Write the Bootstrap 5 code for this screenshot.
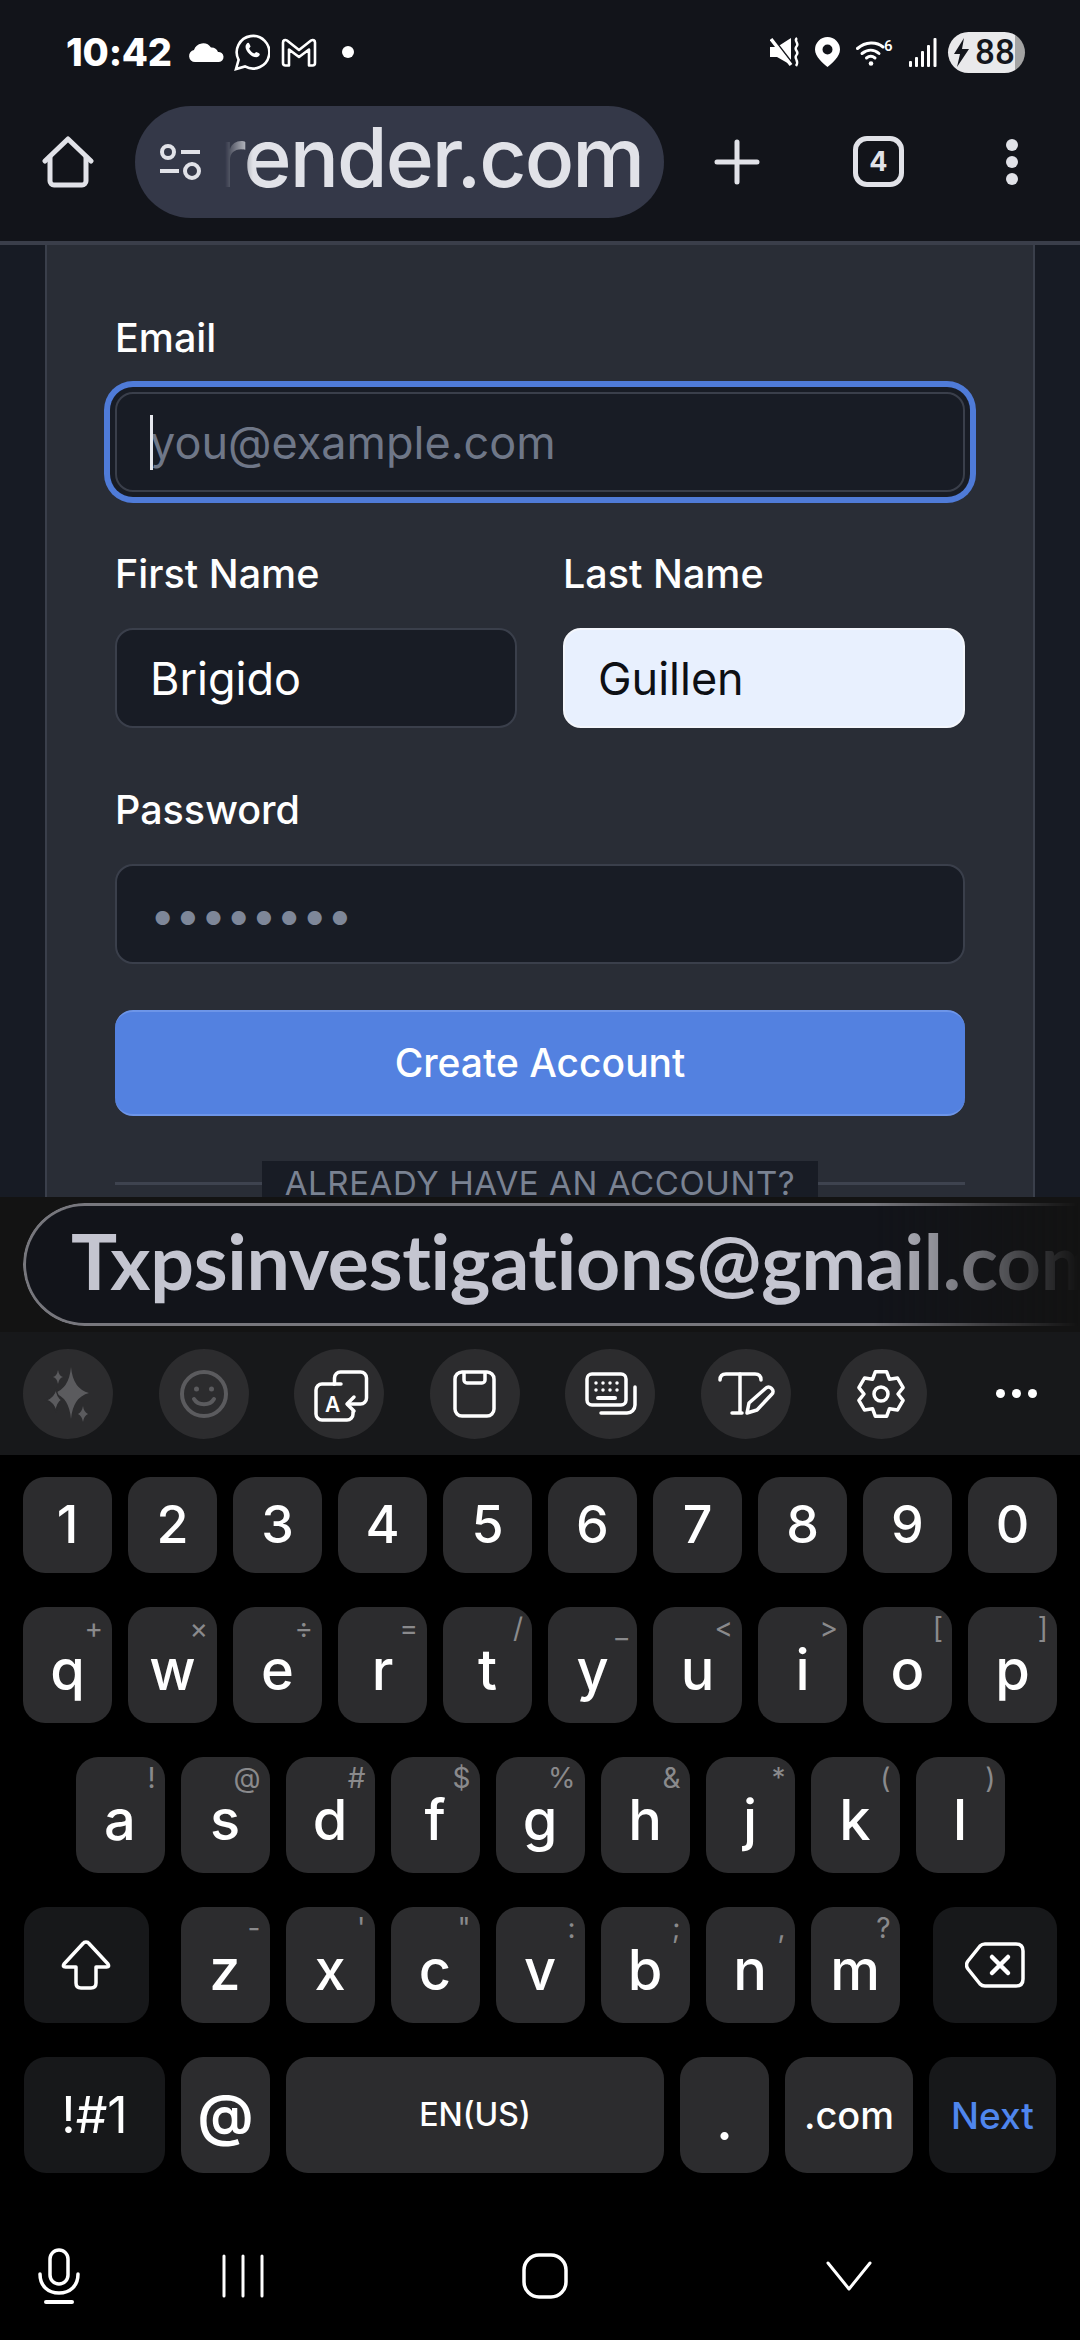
<!DOCTYPE html>
<html lang="en">
<head>
    <meta charset="UTF-8">
    <title>Create Account</title>
    <meta name="viewport" content="width=device-width, initial-scale=1">
    <link href="https://cdn.jsdelivr.net/npm/bootstrap@5.3.3/dist/css/bootstrap.min.css" rel="stylesheet">
    <style>
        html, body { margin: 0; background: #000; }
        body { width: 1080px; height: 2340px; overflow: hidden; font-family: Inter, "Liberation Sans", sans-serif; }
        svg { display: block; flex: none; }

        /* phone chrome */
        .phone-top { background: #12141a; height: 241px; }
        .status-row { height: 104px; padding: 0 55px 0 66px; color: #fff; }
        .clock { font-size: 38px; font-weight: 800; line-height: 1; width: 122px; letter-spacing: -.2px; }
        .battery-pill { width: 77px; height: 41px; border-radius: 21px; background: linear-gradient(90deg, #e9e9eb 87%, #a3a3a3 87%); color: #14161c; font: 500 35px/41px Roboto, sans-serif; padding-left: 6px; gap: 6px; }
        .tool-row { height: 137px; padding: 0 0 22px 42px; color: #e1e2e8; }
        .url-pill { width: 529px; height: 112px; border-radius: 56px; background: #343848; margin-left: 41px; padding: 0 21px 0 24px; color: #e1e2e8; }
        .url-text { width: 418px; height: 112px; margin-left: 24px; overflow: hidden; font-size: 82px; font-weight: 500; line-height: 104px; letter-spacing: -2px; white-space: nowrap; direction: rtl; -webkit-mask-image: linear-gradient(90deg, transparent 0, #000 28px); mask-image: linear-gradient(90deg, transparent 0, #000 28px); }
        .tab-count { width: 51px; height: 51px; border: 5px solid #e1e2e8; border-radius: 14px; font-size: 27px; font-weight: 700; line-height: 1; }
        .page-rule { height: 4px; background: #3a3e4a; }

        /* web page */
        .web-view { height: 952px; overflow: hidden; background: #171b24; padding: 0 45px; }
        .signup-panel { height: 100%; background: #292d36; border: solid #3a3f4b; border-width: 0 2px; padding: 75px 68px 0; }
        .signup-panel .form-label { display: block; color: #fff; font-size: 39.5px; font-weight: 500; line-height: 36px; margin: 0 0 36px; }
        .signup-panel .form-control { height: 100px; background: #181c25; border: 2px solid #3a3f4b; border-radius: 18px; color: #fff; font-size: 45px; line-height: 1; padding: 0 33px; box-shadow: none; }
        .signup-panel .form-control::placeholder { color: #6f7788; opacity: 1; }
        .signup-panel .form-control.input-active { box-shadow: 0 0 0 5px #181c25, 0 0 0 11px #4f7bd8; }
        .signup-panel .form-control.input-filled { background: #e8f0fe; border-color: #f3f6fc; color: #0d0f14; }
        .signup-panel .form-control.input-secret { color: #7e8799; }
        .field-gap { margin-bottom: 64px; }
        .name-row { --bs-gutter-x: 46px; }
        .caret-line { position: absolute; left: 35px; top: 23px; width: 3px; height: 55px; background: #e6e8ee; }
        .signup-panel .btn-create { height: 106px; background: #5381e0; border: 0; border-top: 2px solid #6d95e8; border-bottom: 2px solid #6d95e8; border-radius: 18px; color: #fff; font-size: 39px; font-weight: 500; margin-top: 46px; }
        .or-rule { margin-top: 45px; height: 44px; }
        .or-rule::before, .or-rule::after { content: ""; flex: 1; height: 3px; background: #3e434f; }
        .or-text { background: #181c25; color: #7a8292; font-size: 33px; line-height: 44px; padding: 0 23px; letter-spacing: .6px; white-space: nowrap; }

        /* keyboard */
        .suggest-bar { height: 135px; background: #131313; padding: 6px 0 6px 23px; overflow: hidden; }
        .suggest-pill { width: 1100px; height: 123px; border-radius: 62px 0 0 62px; background: #12141a; border: 3px solid; border-right: 0; border-image: none; border-color: #77777d; padding: 0 0 9px 45px; color: #c4c5d0; -webkit-mask-image: linear-gradient(90deg, #000 850px, transparent 1055px); mask-image: linear-gradient(90deg, #000 850px, transparent 1055px); }
        .suggest-text { font-family: Lato, Inter, sans-serif; font-size: 77px; font-weight: 700; line-height: 1; white-space: nowrap; font-variant-ligatures: none; letter-spacing: -.3px; }
        .action-bar { height: 123px; background: #17181a; padding: 0 23px; gap: 45.6px; }
        .action-dot { width: 90px; height: 90px; border-radius: 50%; background: #2c2c2e; }
        .more-dots { gap: 7px; margin-left: 24px; }
        .more-dots i { width: 9px; height: 9px; border-radius: 50%; background: #fff; display: block; }
        .keys-wrap { background: #000; height: 885px; padding-top: 22px; }
        .key-row { display: flex; justify-content: center; gap: 16px; margin-bottom: 34px; }
        .kb-key { position: relative; width: 89px; height: 116px; padding: 10px 0 0; border: 0; border-radius: 22px; background: #2c2c2e; color: #fff; font-size: 56px; font-weight: 500; line-height: 1; }
        .digits .kb-key { height: 96px; font-size: 52px; padding: 0; }
        .kb-key.key-dim { background: #17181a; }
        .key-hint { position: absolute; top: 5px; right: 9px; color: #8a8a8c; font-size: 28px; font-weight: 400; line-height: 1.2; }
        .key-wide-shift { width: 125px; margin-right: 16px; padding: 0; }
        .key-wide-del { width: 124px; margin-left: 17px; padding: 0; }
        .key-sym { width: 141px; padding: 0; font-size: 50px; font-weight: 400; }
        .key-at { padding: 0; font-weight: 600; font-size: 56px; }
        .key-space { width: 378px; padding: 0; font-size: 32px; }
        .key-dotcom { width: 128px; padding: 0; font-size: 38px; }
        .key-next { width: 127px; padding: 0; font-size: 37px; color: #4f86ee; }
        .nav-row { height: 90px; margin-top: 58px; padding: 0 38px; }
    </style>
</head>
<body>
    <div class="phone-top">
        <div class="status-row d-flex align-items-center">
            <div class="clock">10:42</div>
            <svg width="36" height="20" viewBox="0 0 36 20" fill="#fff"><path d="M7 20a6 6 0 0 1-1-11.900A9.500 9.500 0 0 1 23 5.500 7 7 0 0 1 30 10a5 5 0 0 1 1 10z"/></svg>
            <svg style="margin-left:10px" width="36" height="37" viewBox="0 0 36 37" fill="none" stroke="#fff" stroke-width="2.600"><path d="M2 35l2.600-9.200A16.300 16.300 0 1 1 11 32.400z"/><path fill="#fff" stroke="none" d="M12.500 10c1.100-1.600 2.300-1.600 3 0l1.100 2.500-1.500 2c1 2.300 2.800 4 5.200 5.100l1.900-1.600 2.500 1.100c1.500.8 1.500 1.900 0 3.100-2.100 1.800-5.700 1-9.300-2.300S10.400 12.200 12.500 10z"/></svg>
            <svg style="margin-left:11px" width="36" height="29" viewBox="0 0 36 29" fill="none" stroke="#fff" stroke-width="2.600" stroke-linejoin="round"><path d="M2 4.500C2 2.500 4 1.200 6 2.500l12 9.500 12-9.500c2-1.300 4-0 4 2V25c0 1.300-.8 2.500-2.500 2.500H28V11.500L18 19 8 11.500v16H4.500C2.800 27.500 2 26.300 2 25z"/></svg>
            <svg style="margin-left:25px" width="12" height="12"><circle cx="6" cy="6" r="6" fill="#fff"/></svg>
            <div class="ms-auto d-flex align-items-center">
                <svg width="30" height="30" viewBox="0 0 30 30" fill="#fff"><path d="M0 10h7L21 1v27L7 20H0z"/><path d="M-1 1l21 27" stroke="#12141a" stroke-width="2" transform="translate(3 -1)"/><path d="M1 2l20 26" stroke="#fff" stroke-width="3.500"/><path d="M27 1c-4 3 3 5-.5 8.500s3.500 5 0 8.500 3.500 5-.5 11" fill="none" stroke="#fff" stroke-width="2.400"/></svg>
                <svg style="margin-left:15px" width="25" height="30" viewBox="0 0 25 30" fill="#fff"><path fill-rule="evenodd" d="M12.500 0A12.500 12.500 0 0 1 25 12.500C25 20 17 26 12.500 30 8 26 0 20 0 12.500A12.500 12.500 0 0 1 12.500 0zm0 7.500a5 5 0 1 0 0 10 5 5 0 0 0 0-10z"/></svg>
                <svg style="margin-left:16px" width="37" height="27" viewBox="0 0 37 27" fill="none" stroke="#fff" stroke-width="3" stroke-linecap="round"><path d="M1.500 9.500c8-7 19-7 25.500-1.500"/><path d="M6 14.500c5.500-4.500 12-4.500 17 0"/><path d="M10.500 19c3-2.500 5.500-2.500 8.500 0"/><circle cx="15" cy="24.500" r="2.300" fill="#fff" stroke="none"/><text x="28" y="12" font-size="15" font-weight="600" fill="#fff" stroke="none" font-family="Roboto, sans-serif">6</text></svg>
                <svg style="margin-left:16px" width="28" height="30" viewBox="0 0 28 30" fill="#fff"><rect x="0" y="24" width="3" height="6" rx="1"/><rect x="6" y="20" width="3" height="10" rx="1"/><rect x="12" y="14" width="3" height="16" rx="1"/><rect x="18" y="8" width="3" height="22" rx="1"/><rect x="24.500" y="1" width="3" height="29" rx="1"/></svg>
                <div class="battery-pill d-flex align-items-center" style="margin-left:11px">
                    <svg width="15" height="29" viewBox="0 0 15 29" fill="#14161c"><path d="M10 0L0 16h6l-3 13L15 11H8z"/></svg>
                    <span>88</span>
                </div>
            </div>
        </div>
        <div class="tool-row d-flex align-items-center">
            <svg width="52" height="52" viewBox="0 0 52 52" fill="none" stroke="#e1e2e8" stroke-width="5" stroke-linejoin="round" stroke-linecap="round"><path d="M3 25L26 3l23 22"/><path d="M8 21v24a4 4 0 0 0 4 4h28a4 4 0 0 0 4-4V21"/></svg>
            <div class="url-pill d-flex align-items-center">
                <svg width="42" height="36" viewBox="0 0 42 36" fill="none" stroke="#e1e2e8" stroke-width="4"><circle cx="9" cy="8" r="6"/><path d="M22 8h19M1 27h19"/><circle cx="33" cy="27" r="7"/></svg>
                <div class="url-text"><bdi>onrender.com</bdi></div>
            </div>
            <svg style="margin-left:50px" width="46" height="46" viewBox="0 0 46 46" stroke="#e1e2e8" stroke-width="5" stroke-linecap="round"><path d="M23 3v40M3 23h40"/></svg>
            <div class="tab-count d-flex align-items-center justify-content-center" style="margin-left:93px">4</div>
            <svg style="margin-left:101px" width="14" height="48" viewBox="0 0 14 48" fill="#e1e2e8"><circle cx="7" cy="7" r="6"/><circle cx="7" cy="24" r="6"/><circle cx="7" cy="41" r="6"/></svg>
        </div>
    </div>
    <div class="page-rule"></div>

    <div class="web-view">
        <div class="signup-panel">
            <form autocomplete="off">
                <div class="field-gap">
                    <label class="form-label" for="email">Email</label>
                    <div class="position-relative">
                        <input class="form-control input-active" id="email" type="email" placeholder="you@example.com">
                        <span class="caret-line"></span>
                    </div>
                </div>
                <div class="row name-row field-gap">
                    <div class="col-6">
                        <label class="form-label" for="first">First Name</label>
                        <input class="form-control" id="first" type="text" value="Brigido">
                    </div>
                    <div class="col-6">
                        <label class="form-label" for="last">Last Name</label>
                        <input class="form-control input-filled" id="last" type="text" value="Guillen">
                    </div>
                </div>
                <div>
                    <label class="form-label" for="password">Password</label>
                    <input class="form-control input-secret" id="password" type="password" value="password">
                </div>
                <button type="button" class="btn btn-create w-100">Create Account</button>
                <div class="or-rule d-flex align-items-center">
                    <span class="or-text">ALREADY HAVE AN ACCOUNT?</span>
                </div>
            </form>
        </div>
    </div>

    <div class="suggest-bar">
        <div class="suggest-pill d-flex align-items-center">
            <span class="suggest-text">Txpsinvestigations@gmail.com</span>
        </div>
    </div>
    <div class="action-bar d-flex align-items-center">
        <div class="action-dot"><svg width="90" height="90" viewBox="0 0 90 90" fill="#5b5b5e"><path d="M48 18q2 22 18 26-16 4-18 26-2-22-17-26 15-4 17-26z"/><path d="M35 21q1 6 5 7-4 1-5 7-1-6-5-7 4-1 5-7z"/><path d="M33 39q1 9 6 12-5 3-6 12-2-9-10-12 8-3 10-12z" stroke="#2c2c2e" stroke-width="1.500"/><path d="M60 57q.8 6 5 8-4.200 2-5 8-1-6-5-8 4-2 5-8z"/></svg></div>
        <div class="action-dot"><svg width="90" height="90" viewBox="0 0 90 90" fill="none" stroke="#5b5b5e" stroke-width="4"><circle cx="45" cy="45" r="22"/><circle cx="37.500" cy="40" r="2.500" fill="#5b5b5e" stroke="none"/><circle cx="52.500" cy="40" r="2.500" fill="#5b5b5e" stroke="none"/><path d="M35 50c4 7 16 7 20 0" stroke-linecap="round"/></svg></div>
        <div class="action-dot"><svg width="90" height="90" viewBox="0 0 90 90" fill="none" stroke="#fff" stroke-width="3.500" stroke-linecap="round" stroke-linejoin="round"><path d="M40 35H28a6 6 0 0 0-6 6v24a6 6 0 0 0 6 6h25a6 6 0 0 0 6-6v-2"/><path d="M47 35h-7"/><path d="M40.500 35v-6a6 6 0 0 1 6-6h20a6 6 0 0 1 6 6v20a6 6 0 0 1-6 6H54"/><path d="M60 48l-7 7 7 7"/><text x="31" y="63" font-family="Inter, sans-serif" font-size="21" font-weight="600" fill="#fff" stroke="none">A</text></svg></div>
        <div class="action-dot"><svg width="90" height="90" viewBox="0 0 90 90" fill="none" stroke="#fff" stroke-width="3.500" stroke-linejoin="round"><rect x="25" y="23" width="39" height="44" rx="7"/><path d="M34 23v8a3 3 0 0 0 3 3h15a3 3 0 0 0 3-3v-8"/></svg></div>
        <div class="action-dot"><svg width="90" height="90" viewBox="0 0 90 90" fill="none" stroke="#fff" stroke-width="3.500" stroke-linecap="round" stroke-linejoin="round"><rect x="22" y="25" width="39" height="31" rx="5"/><path d="M36 64h26a8 8 0 0 0 8-8V38"/><path d="M33 49h17" stroke-width="4"/><path d="M31 34h0M38 34h0M45 34h0M52 34h0M31 41h0M38 41h0M45 41h0M52 41h0"/></svg></div>
        <div class="action-dot"><svg width="90" height="90" viewBox="0 0 90 90" fill="none" stroke="#fff" stroke-width="3.500" stroke-linecap="round" stroke-linejoin="round"><path d="M19 31c0-4 2-6 6-6h29c4 0 6 2 6 6"/><path d="M39 25v39M31 64h10"/><path d="M46 64l2-10 17-15a3.500 3.500 0 0 1 5 0l1 1a3.500 3.500 0 0 1 0 5L56 61z"/></svg></div>
        <div class="action-dot"><svg width="90" height="90" viewBox="0 0 90 90" fill="none" stroke="#fff" stroke-width="3.500" stroke-linejoin="round"><path transform="translate(44 45)" d="M5.600-22.300L8.500-14.700 16.500-16 22.100-6.300 17 0 22.100 6.300 16.500 16 8.500 14.700 5.600 22.300-5.600 22.300-8.500 14.700-16.500 16-22.100 6.300-17 0-22.100-6.300-16.500-16-8.500-14.700-5.600-22.300z"/><circle cx="44" cy="45" r="7"/></svg></div>
        <div class="more-dots d-flex"><i></i><i></i><i></i></div>
    </div>

    <div class="keys-wrap">
        <div class="key-row digits">
            <button class="kb-key">1</button><button class="kb-key">2</button><button class="kb-key">3</button><button class="kb-key">4</button><button class="kb-key">5</button><button class="kb-key">6</button><button class="kb-key">7</button><button class="kb-key">8</button><button class="kb-key">9</button><button class="kb-key">0</button>
        </div>
        <div class="key-row">
            <button class="kb-key">q<span class="key-hint">+</span></button><button class="kb-key">w<span class="key-hint">×</span></button><button class="kb-key">e<span class="key-hint">÷</span></button><button class="kb-key">r<span class="key-hint">=</span></button><button class="kb-key">t<span class="key-hint">/</span></button><button class="kb-key">y<span class="key-hint">_</span></button><button class="kb-key">u<span class="key-hint">&lt;</span></button><button class="kb-key">i<span class="key-hint">&gt;</span></button><button class="kb-key">o<span class="key-hint">[</span></button><button class="kb-key">p<span class="key-hint">]</span></button>
        </div>
        <div class="key-row">
            <button class="kb-key">a<span class="key-hint">!</span></button><button class="kb-key">s<span class="key-hint">@</span></button><button class="kb-key">d<span class="key-hint">#</span></button><button class="kb-key">f<span class="key-hint">$</span></button><button class="kb-key">g<span class="key-hint">%</span></button><button class="kb-key">h<span class="key-hint">&amp;</span></button><button class="kb-key">j<span class="key-hint">*</span></button><button class="kb-key">k<span class="key-hint">(</span></button><button class="kb-key">l<span class="key-hint">)</span></button>
        </div>
        <div class="key-row">
            <button class="kb-key key-dim key-wide-shift d-flex align-items-center justify-content-center"><svg width="52" height="52" viewBox="0 0 52 52" fill="none" stroke="#fff" stroke-width="3.500" stroke-linejoin="round"><path d="M26 3q2 0 3 1.500L48 25q2 3-1.500 3H36v16q0 5-5 5H21q-5 0-5-5V28H5.500Q2 28 4 25L23 4.500Q24 3 26 3z"/></svg></button>
            <button class="kb-key">z<span class="key-hint">-</span></button><button class="kb-key">x<span class="key-hint">'</span></button><button class="kb-key">c<span class="key-hint">"</span></button><button class="kb-key">v<span class="key-hint">:</span></button><button class="kb-key">b<span class="key-hint">;</span></button><button class="kb-key">n<span class="key-hint">,</span></button><button class="kb-key">m<span class="key-hint">?</span></button>
            <button class="kb-key key-dim key-wide-del d-flex align-items-center justify-content-center"><svg width="60" height="46" viewBox="0 0 60 46" fill="none" stroke="#fff" stroke-width="3.500" stroke-linejoin="round" stroke-linecap="round"><path d="M20 2h31q7 0 7 7v28q0 7-7 7H20q-3 0-5-2L3 27q-3-4 0-8L15 4q2-2 5-2z"/><path d="M27 15l16 16M43 15L27 31" stroke-width="4.500"/></svg></button>
        </div>
        <div class="key-row">
            <button class="kb-key key-dim key-sym">!#1</button><button class="kb-key key-at">@</button><button class="kb-key key-space">EN(US)</button><button class="kb-key">.</button><button class="kb-key key-dotcom">.com</button><button class="kb-key key-dim key-next">Next</button>
        </div>
        <div class="nav-row d-flex align-items-center">
            <svg width="42" height="56" viewBox="0 0 42 56" fill="none" stroke="#fff" stroke-width="3.500" stroke-linecap="round"><rect x="12" y="2" width="18" height="34" rx="9"/><path d="M2 26c0 12 8 19 19 19s19-7 19-19"/><path d="M8 54h26" stroke-width="4"/></svg>
            <svg style="margin-left:142px" width="42" height="44" viewBox="0 0 42 44" stroke="#fff" stroke-width="3" stroke-linecap="round"><path d="M2 2v40M21 2v40M40 2v40"/></svg>
            <svg style="margin-left:258px" width="46" height="46" viewBox="0 0 46 46" fill="none" stroke="#fff" stroke-width="3.500"><rect x="2" y="2" width="42" height="42" rx="15"/></svg>
            <svg style="margin-left:258px" width="46" height="30" viewBox="0 0 46 30" fill="none" stroke="#fff" stroke-width="3" stroke-linecap="round" stroke-linejoin="round"><path d="M2 2l21 26L44 2"/></svg>
        </div>
    </div>

    <script src="https://cdn.jsdelivr.net/npm/bootstrap@5.3.3/dist/js/bootstrap.bundle.min.js"></script>
</body>
</html>
